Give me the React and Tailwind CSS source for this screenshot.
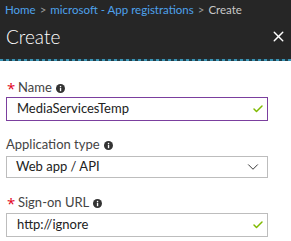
import { Check, ChevronDown, X } from "lucide-react";

const Info = () => (
  <svg viewBox="0 0 10 10" className="w-[9px] h-[9px] ml-[4px]">
    <circle cx="5" cy="5" r="5" fill="#333" />
    <rect x="4.3" y="4.2" width="1.5" height="3.8" fill="#fff" />
    <circle cx="5.05" cy="2.7" r="0.85" fill="#fff" />
  </svg>
);

const Label = ({ required, children }) => (
  <div className="h-[16px] flex items-center text-[13px] text-[#444]">
    {required && (
      <span
        className="text-[#e2001a] w-[11px] ml-[1px] text-[15px] leading-none mt-[1px]"
        style={{ fontFamily: '"Open Sans", sans-serif' }}
      >
        *
      </span>
    )}
    <span>{children}</span>
    <Info />
  </div>
);

export default function App() {
  return (
    <div
      className="w-[291px] h-[241px] bg-white overflow-hidden"
      style={{ fontFamily: 'Lato, "Open Sans", sans-serif' }}
    >
      <div className="h-[20px] bg-[#262626] flex items-center px-[5px] text-[11.5px] whitespace-nowrap">
        <span className="text-[#4ea2ec]">Home</span>
        <span className="text-[#9a9a9a] mx-[4px]">&gt;</span>
        <span className="text-[#4ea2ec]">microsoft - App registrations</span>
        <span className="text-[#9a9a9a] mx-[4px]">&gt;</span>
        <span className="text-[#c8c8c8]">Create</span>
      </div>
      <div className="h-[39px] bg-[#262626] flex items-center justify-between pl-[6px] pr-[4px] pb-[6px]">
        <span className="text-[19px] font-light text-white leading-none">Create</span>
        <X className="w-[17px] h-[17px] text-white" strokeWidth={2} />
      </div>
      <div className="h-[2px] bg-[repeating-linear-gradient(90deg,#3b93b3_0_3px,#1d3d4a_3px_6px)]" />

      <div className="px-[6px] pt-[19px]">
        <Label required>Name</Label>
        <div className="mt-[1px] w-[262px] h-[24px] border border-[#7b3f9e] flex items-center justify-between pl-[10px] pr-[3px] text-[13px] text-[#222]">
          <span>MediaServicesTemp</span>
          <Check className="w-[12px] h-[12px] text-[#7fba00]" strokeWidth={3} />
        </div>

        <div className="mt-[16px]">
          <Label>Application type</Label>
        </div>
        <div className="mt-[3px] w-[262px] h-[22px] border border-[#bdbdbd] flex items-center justify-between pl-[9px] pr-[5px] text-[13px] text-[#222]">
          <span>Web app / API</span>
          <ChevronDown className="w-[18px] h-[18px] text-[#333]" strokeWidth={1.3} />
        </div>

        <div className="mt-[17px]">
          <Label required>Sign-on URL</Label>
        </div>
        <div className="mt-[2px] w-[262px] h-[24px] border border-[#bdbdbd] flex items-center justify-between pl-[10px] pr-[3px] text-[13px] text-[#222]">
          <span>http://ignore</span>
          <Check className="w-[12px] h-[12px] text-[#7fba00]" strokeWidth={3} />
        </div>
      </div>
    </div>
  );
}
